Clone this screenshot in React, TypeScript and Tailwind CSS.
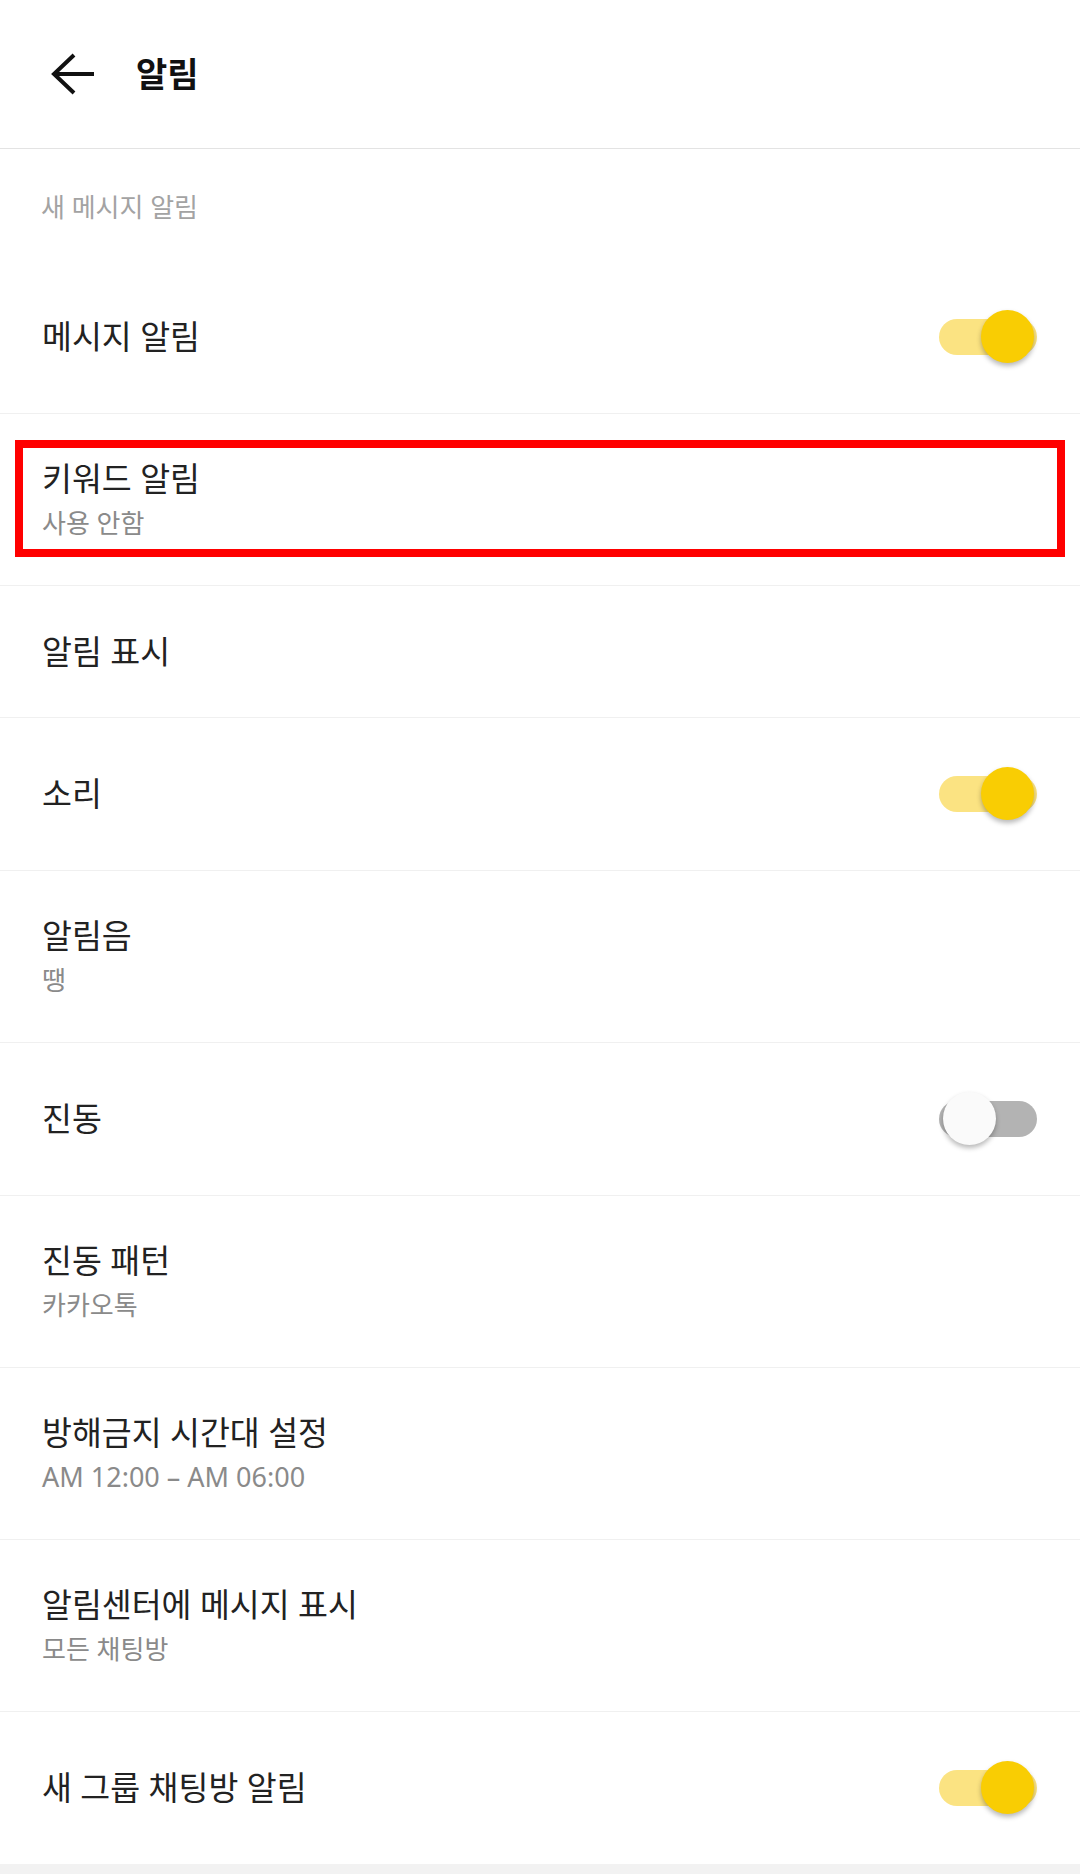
import React from 'react';

type Row = {
  title: string;
  sub?: string;
  subSize?: string;
  toggle?: 'on' | 'off';
  h: string;
  highlight?: boolean;
};

// heights include the 1px bottom divider
const rows: Row[] = [
  { title: '메시지 알림', toggle: 'on', h: 'h-[154px]' },
  { title: '키워드 알림', sub: '사용 안함', h: 'h-[172px]', highlight: true },
  { title: '알림 표시', h: 'h-[132px]' },
  { title: '소리', toggle: 'on', h: 'h-[153px]' },
  { title: '알림음', sub: '땡', h: 'h-[172px]' },
  { title: '진동', toggle: 'off', h: 'h-[153px]' },
  { title: '진동 패턴', sub: '카카오톡', h: 'h-[172px]' },
  { title: '방해금지 시간대 설정', sub: 'AM 12:00 – AM 06:00', subSize: 'text-[27px]', h: 'h-[172px]' },
  { title: '알림센터에 메시지 표시', sub: '모든 채팅방', h: 'h-[172px]' },
  { title: '새 그룹 채팅방 알림', toggle: 'on', h: 'h-[152px]' },
];

const Toggle = ({ on }: { on: boolean }) => (
  <div className="relative w-[98px] h-[54px] flex items-center">
    <div className={`w-full h-[36px] rounded-full ${on ? 'bg-[#fbe382]' : 'bg-[#b3b3b3]'}`} />
    <div
      className={`absolute top-0 w-[53px] h-[53px] rounded-full shadow-[0_3px_5px_rgba(0,0,0,0.28)] ${
        on ? 'right-[3px] bg-[#f9cd03]' : 'left-[4px] bg-[#fafafa]'
      }`}
    />
  </div>
);

const App = () => {
  return (
    <div
      className="min-h-screen bg-[#f2f2f2]"
      style={{ fontFamily: '"Noto Sans", "Noto Sans CJK KR", sans-serif' }}
    >
      <div className="bg-white">
        {/* header */}
        <div className="h-[149px] flex items-center pl-[51px] border-b border-[#e3e3e3]">
          <svg width="44" height="44" viewBox="0 0 44 44" fill="none" stroke="#111" strokeWidth="4">
            <path d="M23 3 L3 22 L23 41" strokeLinejoin="miter" />
            <path d="M4 22 H43" />
          </svg>
          <span className="ml-[41px] text-[34px] font-bold text-[#111] leading-none">알림</span>
        </div>

        <div className="h-[111px] flex items-center pt-[5px] pl-[41px] text-[26px] text-[#a3a3a3]">
          새 메시지 알림
        </div>

        {rows.map((r, i) => (
          <div
            key={r.title}
            className={`relative flex items-center justify-between pl-[42px] pr-[43px] ${r.h} ${
              i < rows.length - 1 ? 'border-b border-[#f0f0f0]' : ''
            }`}
          >
            <div className="flex flex-col">
              <span className="text-[32.5px] leading-[40px] text-[#222]">{r.title}</span>
              {r.sub && (
                <span className={`mt-[7px] ${r.subSize ?? 'text-[26px]'} leading-[34px] text-[#8a8a8a]`}>
                  {r.sub}
                </span>
              )}
            </div>
            {r.toggle && <Toggle on={r.toggle === 'on'} />}
            {r.highlight && (
              <div className="absolute left-[15px] top-[26px] w-[1050px] h-[117px] border-[8px] border-[#ff0000]" />
            )}
          </div>
        ))}
      </div>
    </div>
  );
};

export default App;
